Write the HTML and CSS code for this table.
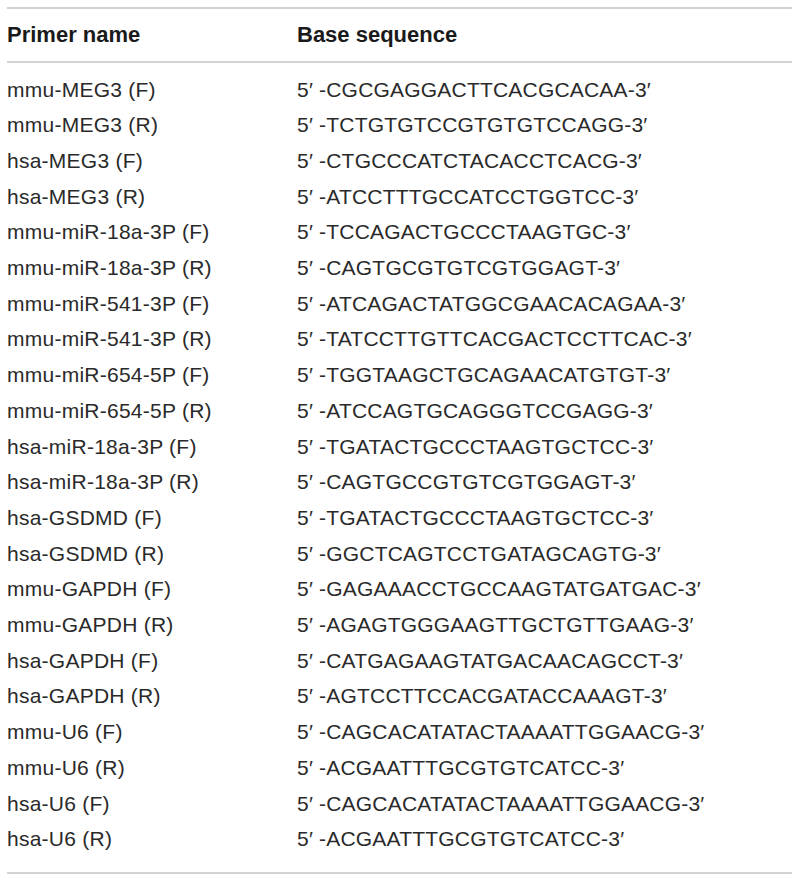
FILE: index.html
```html
<!DOCTYPE html>
<html>
<head>
<meta charset="utf-8">
<link rel="stylesheet" href="styles.css">
</head>
<body>
<table class="primers">
  <thead>
    <tr><th class="name">Primer name</th><th class="seq">Base sequence</th></tr>
  </thead>
  <tbody>
    <tr class="first"><td>mmu-MEG3 (F)</td><td>5′ -CGCGAGGACTTCACGCACAA-3′</td></tr>
    <tr><td>mmu-MEG3 (R)</td><td>5′ -TCTGTGTCCGTGTGTCCAGG-3′</td></tr>
    <tr><td>hsa-MEG3 (F)</td><td>5′ -CTGCCCATCTACACCTCACG-3′</td></tr>
    <tr><td>hsa-MEG3 (R)</td><td>5′ -ATCCTTTGCCATCCTGGTCC-3′</td></tr>
    <tr><td>mmu-miR-18a-3P (F)</td><td>5′ -TCCAGACTGCCCTAAGTGC-3′</td></tr>
    <tr><td>mmu-miR-18a-3P (R)</td><td>5′ -CAGTGCGTGTCGTGGAGT-3′</td></tr>
    <tr><td>mmu-miR-541-3P (F)</td><td>5′ -ATCAGACTATGGCGAACACAGAA-3′</td></tr>
    <tr><td>mmu-miR-541-3P (R)</td><td>5′ -TATCCTTGTTCACGACTCCTTCAC-3′</td></tr>
    <tr><td>mmu-miR-654-5P (F)</td><td>5′ -TGGTAAGCTGCAGAACATGTGT-3′</td></tr>
    <tr><td>mmu-miR-654-5P (R)</td><td>5′ -ATCCAGTGCAGGGTCCGAGG-3′</td></tr>
    <tr><td>hsa-miR-18a-3P (F)</td><td>5′ -TGATACTGCCCTAAGTGCTCC-3′</td></tr>
    <tr><td>hsa-miR-18a-3P (R)</td><td>5′ -CAGTGCCGTGTCGTGGAGT-3′</td></tr>
    <tr><td>hsa-GSDMD (F)</td><td>5′ -TGATACTGCCCTAAGTGCTCC-3′</td></tr>
    <tr><td>hsa-GSDMD (R)</td><td>5′ -GGCTCAGTCCTGATAGCAGTG-3′</td></tr>
    <tr><td>mmu-GAPDH (F)</td><td>5′ -GAGAAACCTGCCAAGTATGATGAC-3′</td></tr>
    <tr><td>mmu-GAPDH (R)</td><td>5′ -AGAGTGGGAAGTTGCTGTTGAAG-3′</td></tr>
    <tr><td>hsa-GAPDH (F)</td><td>5′ -CATGAGAAGTATGACAACAGCCT-3′</td></tr>
    <tr><td>hsa-GAPDH (R)</td><td>5′ -AGTCCTTCCACGATACCAAAGT-3′</td></tr>
    <tr><td>mmu-U6 (F)</td><td>5′ -CAGCACATATACTAAAATTGGAACG-3′</td></tr>
    <tr><td>mmu-U6 (R)</td><td>5′ -ACGAATTTGCGTGTCATCC-3′</td></tr>
    <tr><td>hsa-U6 (F)</td><td>5′ -CAGCACATATACTAAAATTGGAACG-3′</td></tr>
    <tr class="last"><td>hsa-U6 (R)</td><td>5′ -ACGAATTTGCGTGTCATCC-3′</td></tr>
  </tbody>
</table>
</body>
</html>
```

FILE: styles.css
```css
html, body {
  margin: 0;
  padding: 0;
  background: #ffffff;
}
body {
  padding: 7px 0 0 7px;
  font-family: "Liberation Sans", Arial, sans-serif;
  color: #222222;
}
.primers {
  width: 785px;
  border-collapse: collapse;
  border-top: 2px solid #d2d2d2;
  border-bottom: 2px solid #d2d2d2;
}
.primers th {
  text-align: left;
  font-weight: bold;
  font-size: 22px;
  line-height: 23px;
  padding: 14px 0 15px 0;
  color: #1a1a1a;
  border-bottom: 2px solid #d2d2d2;
}
.primers th.name {
  width: 290px;
}
.primers td {
  font-size: 21px;
  line-height: 35.7px;
  padding: 0;
  height: 35.7px;
  white-space: nowrap;
  color: #2a2a2a;
}
.primers td:first-child {
  letter-spacing: 0.25px;
}
.primers td + td {
  letter-spacing: 0.2px;
}
.primers tr.first td {
  padding-top: 8.5px;
}
.primers tr.last td {
  padding-bottom: 15px;
}
```
